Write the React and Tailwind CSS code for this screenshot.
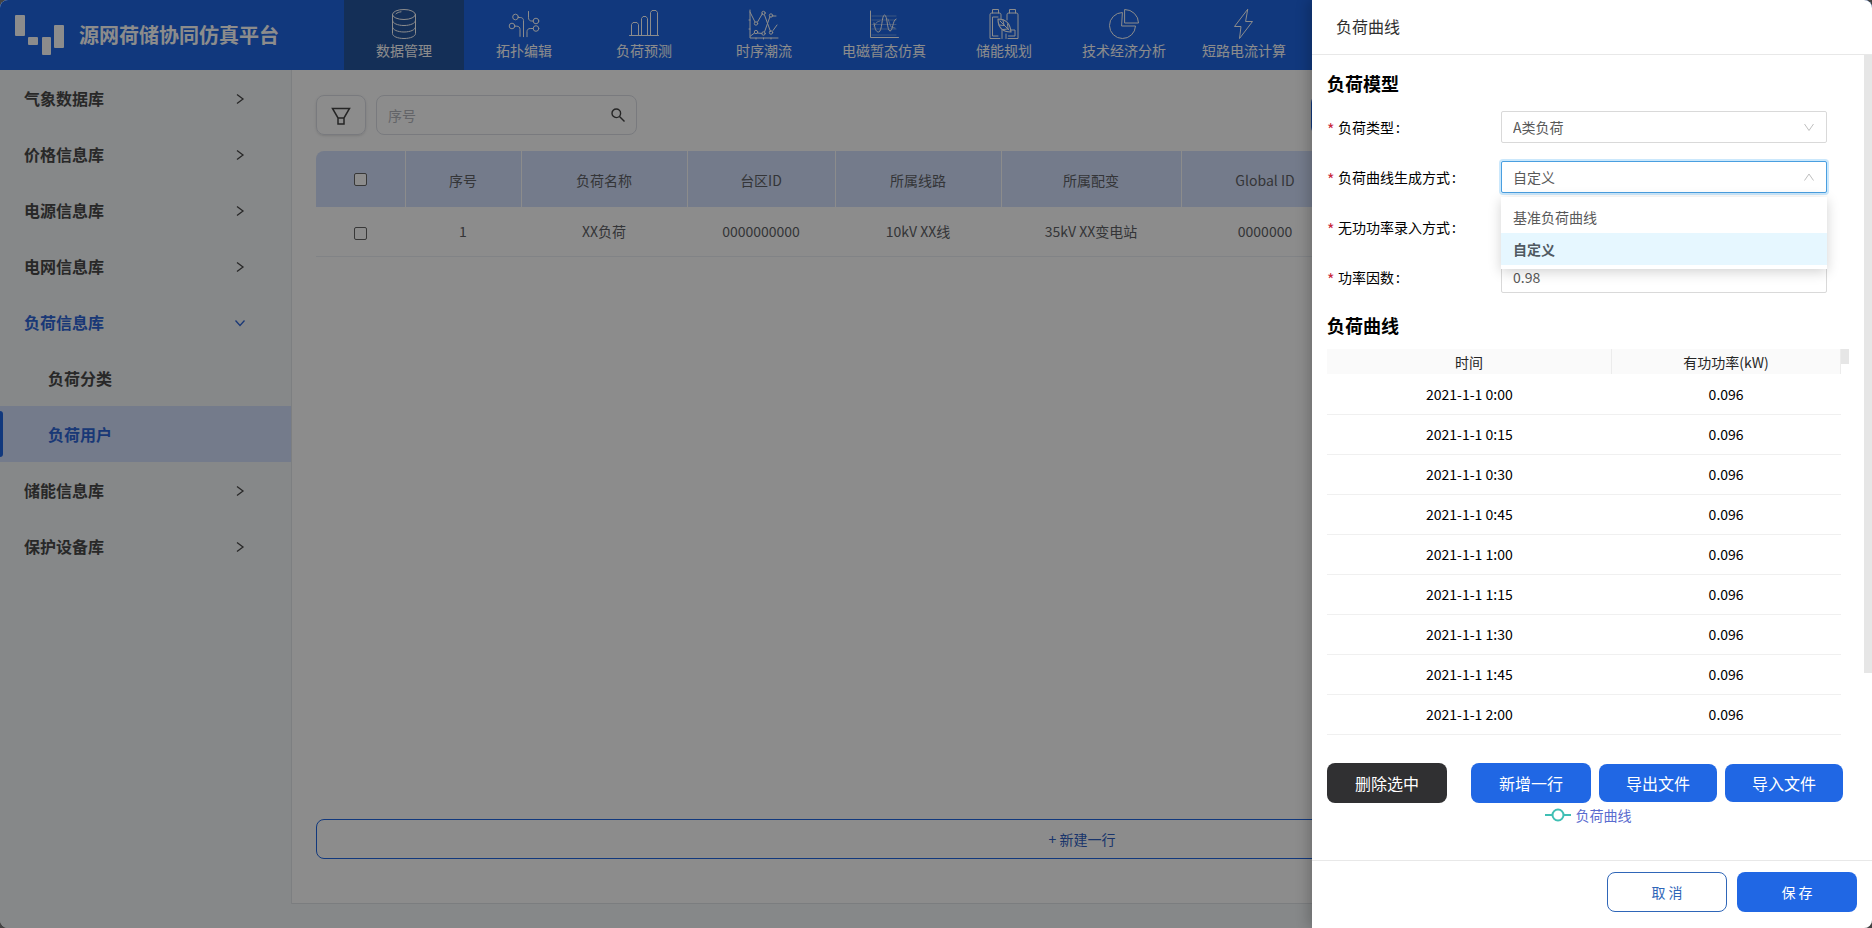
import React, { useState } from "react";

const navItems = [
  { label: "数据管理", icon: DatabaseIcon },
  { label: "拓扑编辑", icon: TopologyIcon },
  { label: "负荷预测", icon: BarsIcon },
  { label: "时序潮流", icon: FlowIcon },
  { label: "电磁暂态仿真", icon: WaveIcon },
  { label: "储能规划", icon: BatteryIcon },
  { label: "技术经济分析", icon: PieIcon },
  { label: "短路电流计算", icon: BoltIcon },
];

const menuItems = [
  { label: "气象数据库" },
  { label: "价格信息库" },
  { label: "电源信息库" },
  { label: "电网信息库" },
  { label: "负荷信息库", open: true, children: ["负荷分类", "负荷用户"] },
  { label: "储能信息库" },
  { label: "保护设备库" },
];

const columns = ["序号", "负荷名称", "台区ID", "所属线路", "所属配变", "Global ID"];
const rows = [["1", "XX负荷", "0000000000", "10kV XX线", "35kV XX变电站", "0000000"]];

const curve = ["0:00", "0:15", "0:30", "0:45", "1:00", "1:15", "1:30", "1:45", "2:00"].map((t) => ({
  time: "2021-1-1 " + t,
  power: "0.096",
}));

function NavSvg({ children }) {
  return (
    <svg width="32" height="32" viewBox="0 0 32 32" fill="none" stroke="currentColor" strokeWidth="1" strokeLinecap="round" strokeLinejoin="round">
      {children}
    </svg>
  );
}

function DatabaseIcon() {
  return (
    <NavSvg>
      <ellipse cx="16" cy="6.5" rx="11.5" ry="5" />
      <path d="M4.5 6.5v19c0 2.8 5.1 5 11.5 5s11.5-2.2 11.5-5v-19" />
      <path d="M4.5 12.5c0 2.8 5.1 5 11.5 5s11.5-2.2 11.5-5" />
      <path d="M4.5 19c0 2.8 5.1 5 11.5 5s11.5-2.2 11.5-5" />
      <path d="M8 5.8c1.2-1.2 3-1.8 5-2" />
    </NavSvg>
  );
}

function TopologyIcon() {
  return (
    <NavSvg>
      <circle cx="7.5" cy="9" r="2.8" />
      <circle cx="4" cy="18" r="2.8" />
      <circle cx="28" cy="13" r="2.8" />
      <circle cx="28" cy="20.5" r="2.8" />
      <path d="M10.3 9.5h2c2 0 3.2 1.2 3.2 3.2v16" />
      <path d="M6.8 18.2h2c2 0 3.2 1.2 3.2 3.2v7" />
      <path d="M20.5 3.5v6.3c0 2 1.2 3.2 3.2 3.2h1.5" />
      <path d="M25.2 20.5h-3c-2 0-3.2 1.2-3.2 3.2v5" />
    </NavSvg>
  );
}

function BarsIcon() {
  return (
    <NavSvg>
      <path d="M1.5 27.5h29" />
      <path d="M3.500 27.500V16.500l1.500-2h4l1.500 2v11" />
      <path d="M13.500 27.500v-17l1.500-2h3l1.500 2v17" />
      <path d="M22.500 27.500v-23l1.500-2h4l1.500 2v23" />
    </NavSvg>
  );
}

function FlowIcon() {
  return (
    <NavSvg>
      <path d="M2 2v28h28" />
      <path d="M2 4l5 10M9.500 14l5-8.500M16.500 7l6 16.500M22 8.500L16.500 24M9.500 25l4.500.5M24 8h4M25 22.500l4-5.500M2.500 28l4-3" />
      <circle cx="8" cy="15.500" r="1.700" />
      <circle cx="15.500" cy="5" r="1.700" />
      <circle cx="23" cy="7.500" r="1.700" />
      <circle cx="8" cy="24" r="1.700" />
      <circle cx="15.500" cy="25.500" r="1.700" />
      <circle cx="23" cy="24.500" r="1.700" />
      <path d="M8 30v1M15.500 30v1M23 30v1M1 12h1M1 21h1" />
    </NavSvg>
  );
}

function WaveIcon() {
  return (
    <NavSvg>
      <path d="M2.500 3v26.500h28" />
      <path d="M4 8h24M4 12h24M4 16.500h24M4 21h24M4 27h24" strokeWidth="0.5" opacity="0.7" />
      <path d="M6 15c1 6 2 9 4.500 9 4 0 3-17 6-17s2.500 16 5.500 16 2.500-11 6-12" />
      <path d="M6 18l3-4 3-1M20 11l3 8 4 1" strokeWidth="0.6" />
    </NavSvg>
  );
}

function BatteryIcon() {
  return (
    <NavSvg>
      <path d="M12 30.500H2V7c0-1.500.5-2 2-2h7c1.500 0 2 .5 2 2v5" />
      <path d="M20 30.500h10V7c0-1.500-.5-2-2-2h-7c-1.500 0-2 .5-2 2v5" />
      <path d="M4.500 5V1.500h6V5M21.500 5V1.500h6V5" />
      <path d="M10 28H4.500V9H10M14 30.500V22M18 30.500V26M20.500 28h6.500v-6h-4" />
      <path d="M10 11c7 0 12 3 13 13-8 0-13-4-13-13z" strokeWidth="1.200" />
      <path d="M12 13l9 9M15 12.500l1 4.500M11 17l5 .5M19.500 16l.5 4.500M15 21.500l5-.5" />
    </NavSvg>
  );
}

function PieIcon() {
  return (
    <NavSvg>
      <path d="M14 4.500A13 13 0 1 0 27.500 18H14z" />
      <path d="M17 1.500A13.500 13.500 0 0 1 30.500 15H17z" />
    </NavSvg>
  );
}

function BoltIcon() {
  return (
    <NavSvg>
      <path d="M19.500 1.500L6.500 18.500H13L11.500 30.500 24.500 13.500H18z" />
    </NavSvg>
  );
}

function Chevron({ open }) {
  return (
    <svg width="12" height="12" viewBox="0 0 12 12" fill="none" stroke="currentColor" strokeWidth="1.3" className="mt-0.5">
      <path d={open ? "M1.500 3.500L6 8.500l4.500-5" : "M3 1.500L9 6l-6 4.500"} />
    </svg>
  );
}

function Header() {
  return (
    <header className="flex h-[70px] shrink-0 bg-[#2067e4] text-white">
      <div className="flex w-[344px] shrink-0 items-center pl-[15px]">
        <svg width="50" height="42" viewBox="0 0 50 42" fill="currentColor">
          <rect x="0" y="1" width="10" height="21" rx="1" />
          <rect x="13" y="23" width="10" height="8" rx="1" />
          <rect x="27" y="23" width="9" height="18" rx="1" />
          <rect x="39" y="11" width="10" height="23" rx="1" />
        </svg>
        <h1 className="ml-[14px] text-xl font-bold whitespace-nowrap">源网荷储协同仿真平台</h1>
      </div>
      <nav className="flex">
        {navItems.map(({ label, icon: Icon }, i) => (
          <a
            key={label}
            href="#"
            className={
              "flex w-[120px] shrink-0 flex-col items-center pt-2 text-sm whitespace-nowrap " +
              (i === 0 ? "bg-[#26569f]" : "")
            }
          >
            <Icon />
            <span>{label}</span>
          </a>
        ))}
      </nav>
    </header>
  );
}

function Sidebar() {
  return (
    <aside className="w-[292px] shrink-0 border-r border-[#e4e7ec] text-base font-bold text-[#4a4a4a]">
      {menuItems.map((item) => (
        <div key={item.label}>
          <a
            href="#"
            className={"flex h-14 items-center justify-between pr-[45px] pl-6 " + (item.open ? "text-[#2f66d8]" : "")}
          >
            {item.label}
            <Chevron open={item.open} />
          </a>
          {item.children?.map((child) => {
            const active = child === "负荷用户";
            return (
              <a
                key={child}
                href="#"
                className={"relative flex h-14 items-center pl-12 " + (active ? "bg-[#d3e0fd] text-[#2f66d8]" : "")}
              >
                {active && <span className="absolute inset-y-[5px] left-0 w-[3px] rounded-r-sm bg-[#2067e4]" />}
                {child}
              </a>
            );
          })}
        </div>
      ))}
    </aside>
  );
}

function LoadTable() {
  const check = "block mx-auto size-[13px] appearance-none rounded-xs border border-[#666] bg-white";
  return (
    <table className="mt-4 w-full table-fixed text-center text-sm text-[#606266]">
      <colgroup>
        <col className="w-[89px]" />
        <col className="w-[116px]" />
        <col className="w-[166px]" />
        <col className="w-[148px]" />
        <col className="w-[166px]" />
        <col className="w-[180px]" />
        <col className="w-[168px]" />
        <col />
      </colgroup>
      <thead>
        <tr className="h-14">
          <th className="rounded-tl-lg bg-[#d3e0fd]">
            <input type="checkbox" aria-label="全选" className={check} />
          </th>
          {columns.map((c) => (
            <th key={c} className="border-l border-white bg-[#d3e0fd] pt-0.5 font-normal">
              {c}
            </th>
          ))}
          <th className="border-l border-white bg-[#d3e0fd]" />
        </tr>
      </thead>
      <tbody>
        {rows.map((r) => (
          <tr key={r[0]} className="h-[49px] border-b border-[#ebeef5]">
            <td className="pt-1">
              <input type="checkbox" aria-label="选择" className={check} />
            </td>
            {r.map((cell, i) => (
              <td key={i}>{cell}</td>
            ))}
            <td />
          </tr>
        ))}
      </tbody>
    </table>
  );
}

function Content() {
  return (
    <main className="flex min-w-0 flex-1 flex-col border-b border-[#e0e3e8] bg-white px-6 pt-[25px] pb-11">
      <div className="flex">
        <button
          aria-label="筛选"
          className="flex h-10 w-[50px] items-center justify-center rounded-lg border border-[#dcdfe6] text-[#444] shadow-sm"
        >
          <svg width="20" height="20" viewBox="0 0 20 20" fill="none" stroke="currentColor" strokeWidth="1.5">
            <path d="M1.500 3.500h17L13 13H7zM7 13v6h6v-6" />
          </svg>
        </button>
        <label className="ml-[10px] flex h-10 w-[261px] items-center rounded-lg border border-[#dcdfe6] px-[11px]">
          <input
            aria-label="序号"
            placeholder="序号"
            className="min-w-0 flex-1 bg-transparent text-sm outline-none placeholder:text-[#b4b7bd]"
          />
          <svg width="14" height="14" viewBox="0 0 14 14" fill="none" stroke="#444" strokeWidth="1.4">
            <circle cx="5.300" cy="5.300" r="4.300" />
            <path d="M8.500 8.500l5 5" />
          </svg>
        </label>
        <button aria-label="新建" className="ml-auto w-[537px] rounded-lg bg-[#2067e4]" />
      </div>
      <LoadTable />
      <button className="mt-auto h-10 shrink-0 rounded-lg border border-[#2067e4] text-sm text-[#2f5fc4]">
        + 新建一行
      </button>
    </main>
  );
}

function FormRow({ id, label, children }) {
  return (
    <div className="flex h-8 items-center text-sm">
      <label htmlFor={id} className="flex w-[174px] shrink-0 items-center leading-5 text-black">
        <span className="w-[11px] pt-1 text-base leading-5 text-[#c8283c]">*</span>
        {label}
        <span className="ml-0.5">:</span>
      </label>
      <div className="relative mr-[22px] flex-1">{children}</div>
    </div>
  );
}

function Select({ id, value, onChange, options, open }) {
  return (
    <>
      <select
        id={id}
        value={value}
        onChange={(e) => onChange(e.target.value)}
        className={
          "block h-8 w-full appearance-none rounded-xs border bg-white px-[11px] text-[#595959] outline-none " +
          (open ? "border-[#4a9fe0] ring-2 ring-[#cbe8fc]" : "border-[#d9d9d9]")
        }
      >
        {options.map((o) => (
          <option key={o}>{o}</option>
        ))}
      </select>
      <svg
        width="12"
        height="12"
        viewBox="0 0 12 12"
        fill="none"
        stroke="#bfbfbf"
        className="pointer-events-none absolute top-[10px] right-3"
      >
        <path d={open ? "M1.500 9.500L6 3l4.500 6.500" : "M1.500 3L6 9.500 10.500 3"} />
      </svg>
      {open && (
        <ul
          role="listbox"
          className="absolute inset-x-0 top-9 z-10 bg-white py-1 text-[#595959] shadow-[0_3px_12px_rgba(0,0,0,0.18)]"
        >
          {options.map((o) => (
            <li
              key={o}
              role="option"
              aria-selected={o === value}
              onClick={() => onChange(o)}
              className={"h-8 px-3 leading-8 " + (o === value ? "bg-[#e6f7ff] font-bold text-[#505a62]" : "")}
            >
              {o}
            </li>
          ))}
        </ul>
      )}
    </>
  );
}

function Drawer() {
  const [type, setType] = useState("A类负荷");
  const [mode, setMode] = useState("自定义");
  const [reactive, setReactive] = useState("功率因数");
  const [factor, setFactor] = useState("0.98");

  return (
    <section className="absolute inset-y-0 right-0 flex w-[560px] flex-col bg-white shadow-[-4px_0_12px_rgba(0,0,0,0.2)]">
      <h2 className="h-[55px] shrink-0 border-b border-[#e8e8e8] pl-6 text-base leading-[52px] text-[#303030]">负荷曲线</h2>

      <div className="flex min-h-0 flex-1 overflow-hidden">
        <div className="min-w-0 flex-1 px-[15px] pt-4">
          <h3 className="text-lg leading-6 font-bold">负荷模型</h3>
          <form className="mt-4 flex flex-col gap-[18px]">
            <FormRow id="load-type" label="负荷类型">
              <Select id="load-type" value={type} onChange={setType} options={["A类负荷"]} />
            </FormRow>
            <FormRow id="curve-mode" label="负荷曲线生成方式">
              <Select id="curve-mode" value={mode} onChange={setMode} options={["基准负荷曲线", "自定义"]} open />
            </FormRow>
            <FormRow id="reactive" label="无功功率录入方式">
              <Select id="reactive" value={reactive} onChange={setReactive} options={["功率因数"]} />
            </FormRow>
            <FormRow id="factor" label="功率因数">
              <input
                id="factor"
                value={factor}
                onChange={(e) => setFactor(e.target.value)}
                className="block h-8 w-full rounded-xs border border-[#d9d9d9] px-[11px] text-[#595959] outline-none"
              />
            </FormRow>
          </form>

          <h3 className="mt-5 text-lg leading-6 font-bold">负荷曲线</h3>
          <div className="mt-3 flex">
            <table className="flex-1 table-fixed text-center text-sm text-black">
              <thead>
                <tr className="h-[25px] bg-[#fafafa] text-[#262626]">
                  <th className="w-[285px] border-r border-[#ececec] font-normal">时间</th>
                  <th className="w-[229px] border-r border-[#ececec] font-normal">有功功率(kW)</th>
                </tr>
              </thead>
              <tbody>
                {curve.map((p) => (
                  <tr key={p.time} className="h-10 border-b border-[#f0f0f0]">
                    <td>{p.time}</td>
                    <td>{p.power}</td>
                  </tr>
                ))}
              </tbody>
            </table>
            <div className="h-[15px] w-2 bg-[#e6e6e6]" />
          </div>

          <div className="mt-7 flex items-center text-base text-white">
            <button className="h-10 w-[120px] rounded-lg bg-[#303032]">删除选中</button>
            <button className="ml-6 h-10 w-[120px] rounded-lg bg-[#2067e4]">新增一行</button>
            <button className="ml-2 h-[38px] w-[118px] rounded-lg bg-[#2067e4]">导出文件</button>
            <button className="ml-2 h-[38px] w-[118px] rounded-lg bg-[#2067e4]">导入文件</button>
          </div>
          <div className="flex h-6 items-center justify-center gap-[5px] text-sm text-[#5a6ccf]">
            <svg width="26" height="14" viewBox="0 0 26 14" fill="white" stroke="#3fbfb4" strokeWidth="2">
              <path d="M0 7h26" />
              <circle cx="13" cy="7" r="5.500" />
            </svg>
            负荷曲线
          </div>
        </div>
        {/* scrollbar thumb */}
        <div className="h-[618px] w-2 bg-[#e6e6e6]" />
      </div>

      <footer className="flex h-[68px] shrink-0 justify-end gap-[10px] border-t border-[#e8e8e8] px-[15px] pt-[11px] text-sm">
        <button className="h-10 w-[120px] rounded-lg border border-[#2f66b8] text-[#2f66b8]">取 消</button>
        <button className="h-10 w-[120px] rounded-lg bg-[#2067e4] text-white">保 存</button>
      </footer>
    </section>
  );
}

export default function App() {
  return (
    <div className="bg-[#444]">
      <div className="relative flex h-screen flex-col overflow-hidden rounded-lg bg-[#f4f7f9] font-['Noto_Sans_CJK_SC',sans-serif]">
        <Header />
        <div className="mb-6 flex min-h-0 flex-1">
          <Sidebar />
          <Content />
        </div>
        <div className="absolute inset-0 bg-black/45" />
        <Drawer />
      </div>
    </div>
  );
}
